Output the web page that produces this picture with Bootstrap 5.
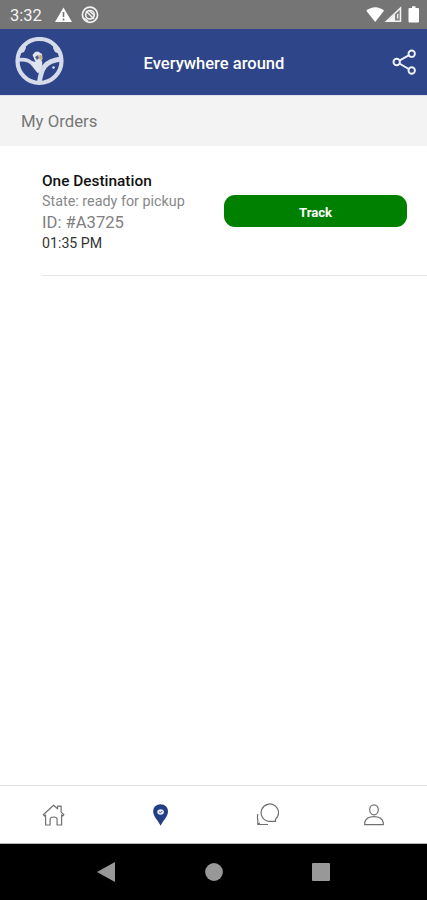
<!DOCTYPE html>
<html lang="en">
<head>
<meta charset="utf-8">
<meta name="viewport" content="width=device-width, initial-scale=1">
<title>My Orders</title>
<link href="https://cdn.jsdelivr.net/npm/bootstrap@5.3.0/dist/css/bootstrap.min.css" rel="stylesheet">
<style>
body { font-family: Roboto, "Liberation Sans", sans-serif; }
svg { display: block; flex: none; }
.screen { height: 900px; width: 427px; }
.status { height: 29px; background: #757575; padding: 1px 7px 0 10px; }
.clock { font-size: 16.5px; width: 45px; color: #f4f4f4; line-height: 28px; padding-top: 1px; }
.appbar { height: 67px; background: #2f4589; border-bottom: 1px solid #dfe2ef; padding: 0 10px 0 14px; }
.brand-title { font-size: 16.55px; font-weight: 500; line-height: 20px; padding-top: 3px; }
.bar-end { width: 54px; }
.subhead { height: 50px; background: #f3f3f3; color: #777; font-size: 16.75px; padding: 1px 0 0 21px; }
.order { height: 130px; margin-left: 42px; padding: 25px 20px 0 0; border-bottom: 1px solid #e4e4e4; }
.order-name { font-size: 15.4px; font-weight: 500; line-height: 20px; color: #111; }
.order-state { font-size: 14.35px; line-height: 21px; color: #888; }
.order-id { font-size: 16.6px; line-height: 21px; color: #808080; }
.order-time { font-size: 14.2px; line-height: 21px; color: #333; }
.track { width: 183px; height: 32px; margin-top: 24px; border-radius: 11px; background: #008000; font-size: 13.1px; font-weight: 700; line-height: 20px; }
.tabs { height: 59px; border-top: 1px solid #e2e2e2; border-bottom: 1px solid #b5b5b5; }
.sysnav { height: 56px; background: #000; padding: 0 53px; }
</style>
</head>
<body class="m-0 bg-white">
<div class="screen d-flex flex-column overflow-hidden">
  <div class="status d-flex align-items-center">
    <span class="clock">3:32</span>
    <svg width="45" height="18" viewBox="55 6 45 18">
      <path d="M63.500 7.500 72 22H55z" fill="#fff"/>
      <path d="M63.500 12v5m0 1.500v2" stroke="#757575" stroke-width="1.600"/>
      <circle cx="90" cy="14.800" r="7.600" fill="none" stroke="#f2f2f2" stroke-width="1.700"/>
      <circle cx="90" cy="14.800" r="4.300" fill="none" stroke="#f2f2f2" stroke-width="1.600"/>
      <path d="m86 11 8 8M89 10.500l5 4.500M84 18l4 3" stroke="#f2f2f2" stroke-width="1.500"/>
    </svg>
    <svg class="ms-auto" width="54" height="18" viewBox="366 6 54 18">
      <path d="M366.300 10.800c5-4.800 13-4.800 17.700 0L375.200 22z" fill="#fff"/>
      <path d="M386.500 21.300 400.500 8v13.300z" fill="#858585" stroke="#f4f4f4" stroke-width="1.500"/>
      <path d="M387 21.500 395 14v7.500z" fill="#f4f4f4"/><path d="M397.700 14v4.500" stroke="#f4f4f4" stroke-width="1.300"/>
      <path d="M409.500 8h2.500V6.200h3.500V8h2.500q1 0 1 1v12.500q0 1-1 1h-8.500q-1 0-1-1V9q0-1 1-1z" fill="#fff"/>
    </svg>
  </div>

  <header class="appbar d-flex align-items-center justify-content-between text-white">
    <svg width="51" height="50" viewBox="0 0 51 50">
      <circle cx="25.500" cy="24" r="22" fill="none" stroke="#d5dbe8" stroke-width="4.200"/>
      <path d="M4 23q9-1.500 13.500 3 4 5 8.500 9" fill="none" stroke="#d5dbe8" stroke-width="3.600"/>
      <path d="M47 22q-12 1.500-16.500 7.500-3.500 5-5 15" fill="none" stroke="#d5dbe8" stroke-width="4.800"/>
      <path d="m17 24 5 1 6-1q1 4-1.500 9l-3 3-3-4z" fill="#dfe4ee"/>
      <path d="m18.500 18 2.500-3 3-.5 4 2.500.5 5-2.500 4-4.500-1z" fill="#e0e5ee"/>
      <path d="m5 13 6-5 1 3-2 4-5 2zM46 13l-6-5-1 3 2 4 5 2z" fill="#d5dbe8"/>
      <path d="m21 20 3-2 1 3-2 2z" fill="#506187"/>
      <path d="m25.500 17.500 2.500 1-.5 4.500-2.500-1z" fill="#cba96a"/>
      <circle cx="39.500" cy="30.500" r="1.200" fill="#e8edf7"/>
    </svg>
    <h1 class="brand-title m-0">Everywhere around</h1>
    <div class="bar-end d-flex justify-content-end">
      <svg width="25" height="28" viewBox="392 48 25 28" fill="none" stroke="#f1f3fb" stroke-width="1.900">
        <path d="m399.800 60.300 8.900-5m-8.900 8.500 8.900 5.200"/>
        <circle cx="411.700" cy="53.700" r="3.200"/><circle cx="396.700" cy="62" r="3.200"/><circle cx="411.700" cy="70.500" r="3.200"/>
      </svg>
    </div>
  </header>
  <div class="subhead d-flex align-items-center">My Orders</div>

  <main class="flex-grow-1">
    <div class="order d-flex justify-content-between align-items-start">
      <div class="text-nowrap">
        <div class="order-name">One Destination</div>
        <div class="order-state">State: ready for pickup</div>
        <div class="order-id">ID: #A3725</div>
        <div class="order-time">01:35 PM</div>
      </div>
      <button type="button" class="track btn text-white border-0 p-0 pt-1">Track</button>
    </div>
  </main>

  <nav class="tabs row g-0 align-items-center">
    <div class="col d-flex justify-content-center">
      <svg width="24" height="24" viewBox="-.6 0 24 24" fill="none" stroke="#707070" stroke-width="1.200" stroke-linejoin="round">
        <path d="M1.700 11.700 12 2.200l4 3.600V3.200h3.500v5.900l2.800 2.600-1 1.200-1.300-1V22h-4.500v-5.500q0-2.500-3.500-2.500t-3.500 2.500V22H4V12l-1.300 1z"/>
      </svg>
    </div>
    <div class="col d-flex justify-content-center">
      <svg width="24" height="24" viewBox="-.6 0 24 24">
        <path d="M12 1.300c-4.300 0-7.400 3.100-7.400 7.200 0 5 4.700 8.700 7.400 14.200 2.700-5.500 7.400-9.200 7.400-14.200 0-4.100-3.100-7.200-7.400-7.200z" fill="#213e87"/>
        <ellipse cx="12" cy="9" rx="3.300" ry="2.800" fill="#e9edf6"/><path d="m10.500 9 1.500.8 1.500-1.800" fill="none" stroke="#425a96"/>
      </svg>
    </div>
    <div class="col d-flex justify-content-center">
      <svg width="24" height="24" viewBox="0 0 24 24" fill="none" stroke="#707070" stroke-width="1.200">
        <path d="M20.500 18.300v-2a8.700 8.700 0 1 0-7 2zM3 11q-1 3-.2 6v4.500H13M3 21l2-1"/>
      </svg>
    </div>
    <div class="col d-flex justify-content-center">
      <svg width="24" height="24" viewBox="0 0 24 24" fill="none" stroke="#707070" stroke-width="1.200">
        <ellipse cx="12" cy="6.800" rx="4.300" ry="5"/><path d="M2.700 21.700v-2.200q1.500-5.800 9.300-5.800t9.300 5.800v2.200z"/>
      </svg>
    </div>
  </nav>
  <div class="sysnav d-flex align-items-center justify-content-between">
    <div class="col d-flex justify-content-center"><svg width="20" height="20" viewBox="0 0 20 20"><path d="M0 10 18 0v20z" fill="#989898"/></svg></div>
    <div class="col d-flex justify-content-center"><svg width="18" height="18" viewBox="0 0 18 18"><circle cx="9" cy="9" r="8.900" fill="#989898"/></svg></div>
    <div class="col d-flex justify-content-center"><svg width="18" height="18" viewBox="0 0 18 18"><rect width="18" height="18" rx="1" fill="#989898"/></svg></div>
  </div>
</div>
<script src="https://cdn.jsdelivr.net/npm/bootstrap@5.3.0/dist/js/bootstrap.bundle.min.js"></script>
</body>
</html>
